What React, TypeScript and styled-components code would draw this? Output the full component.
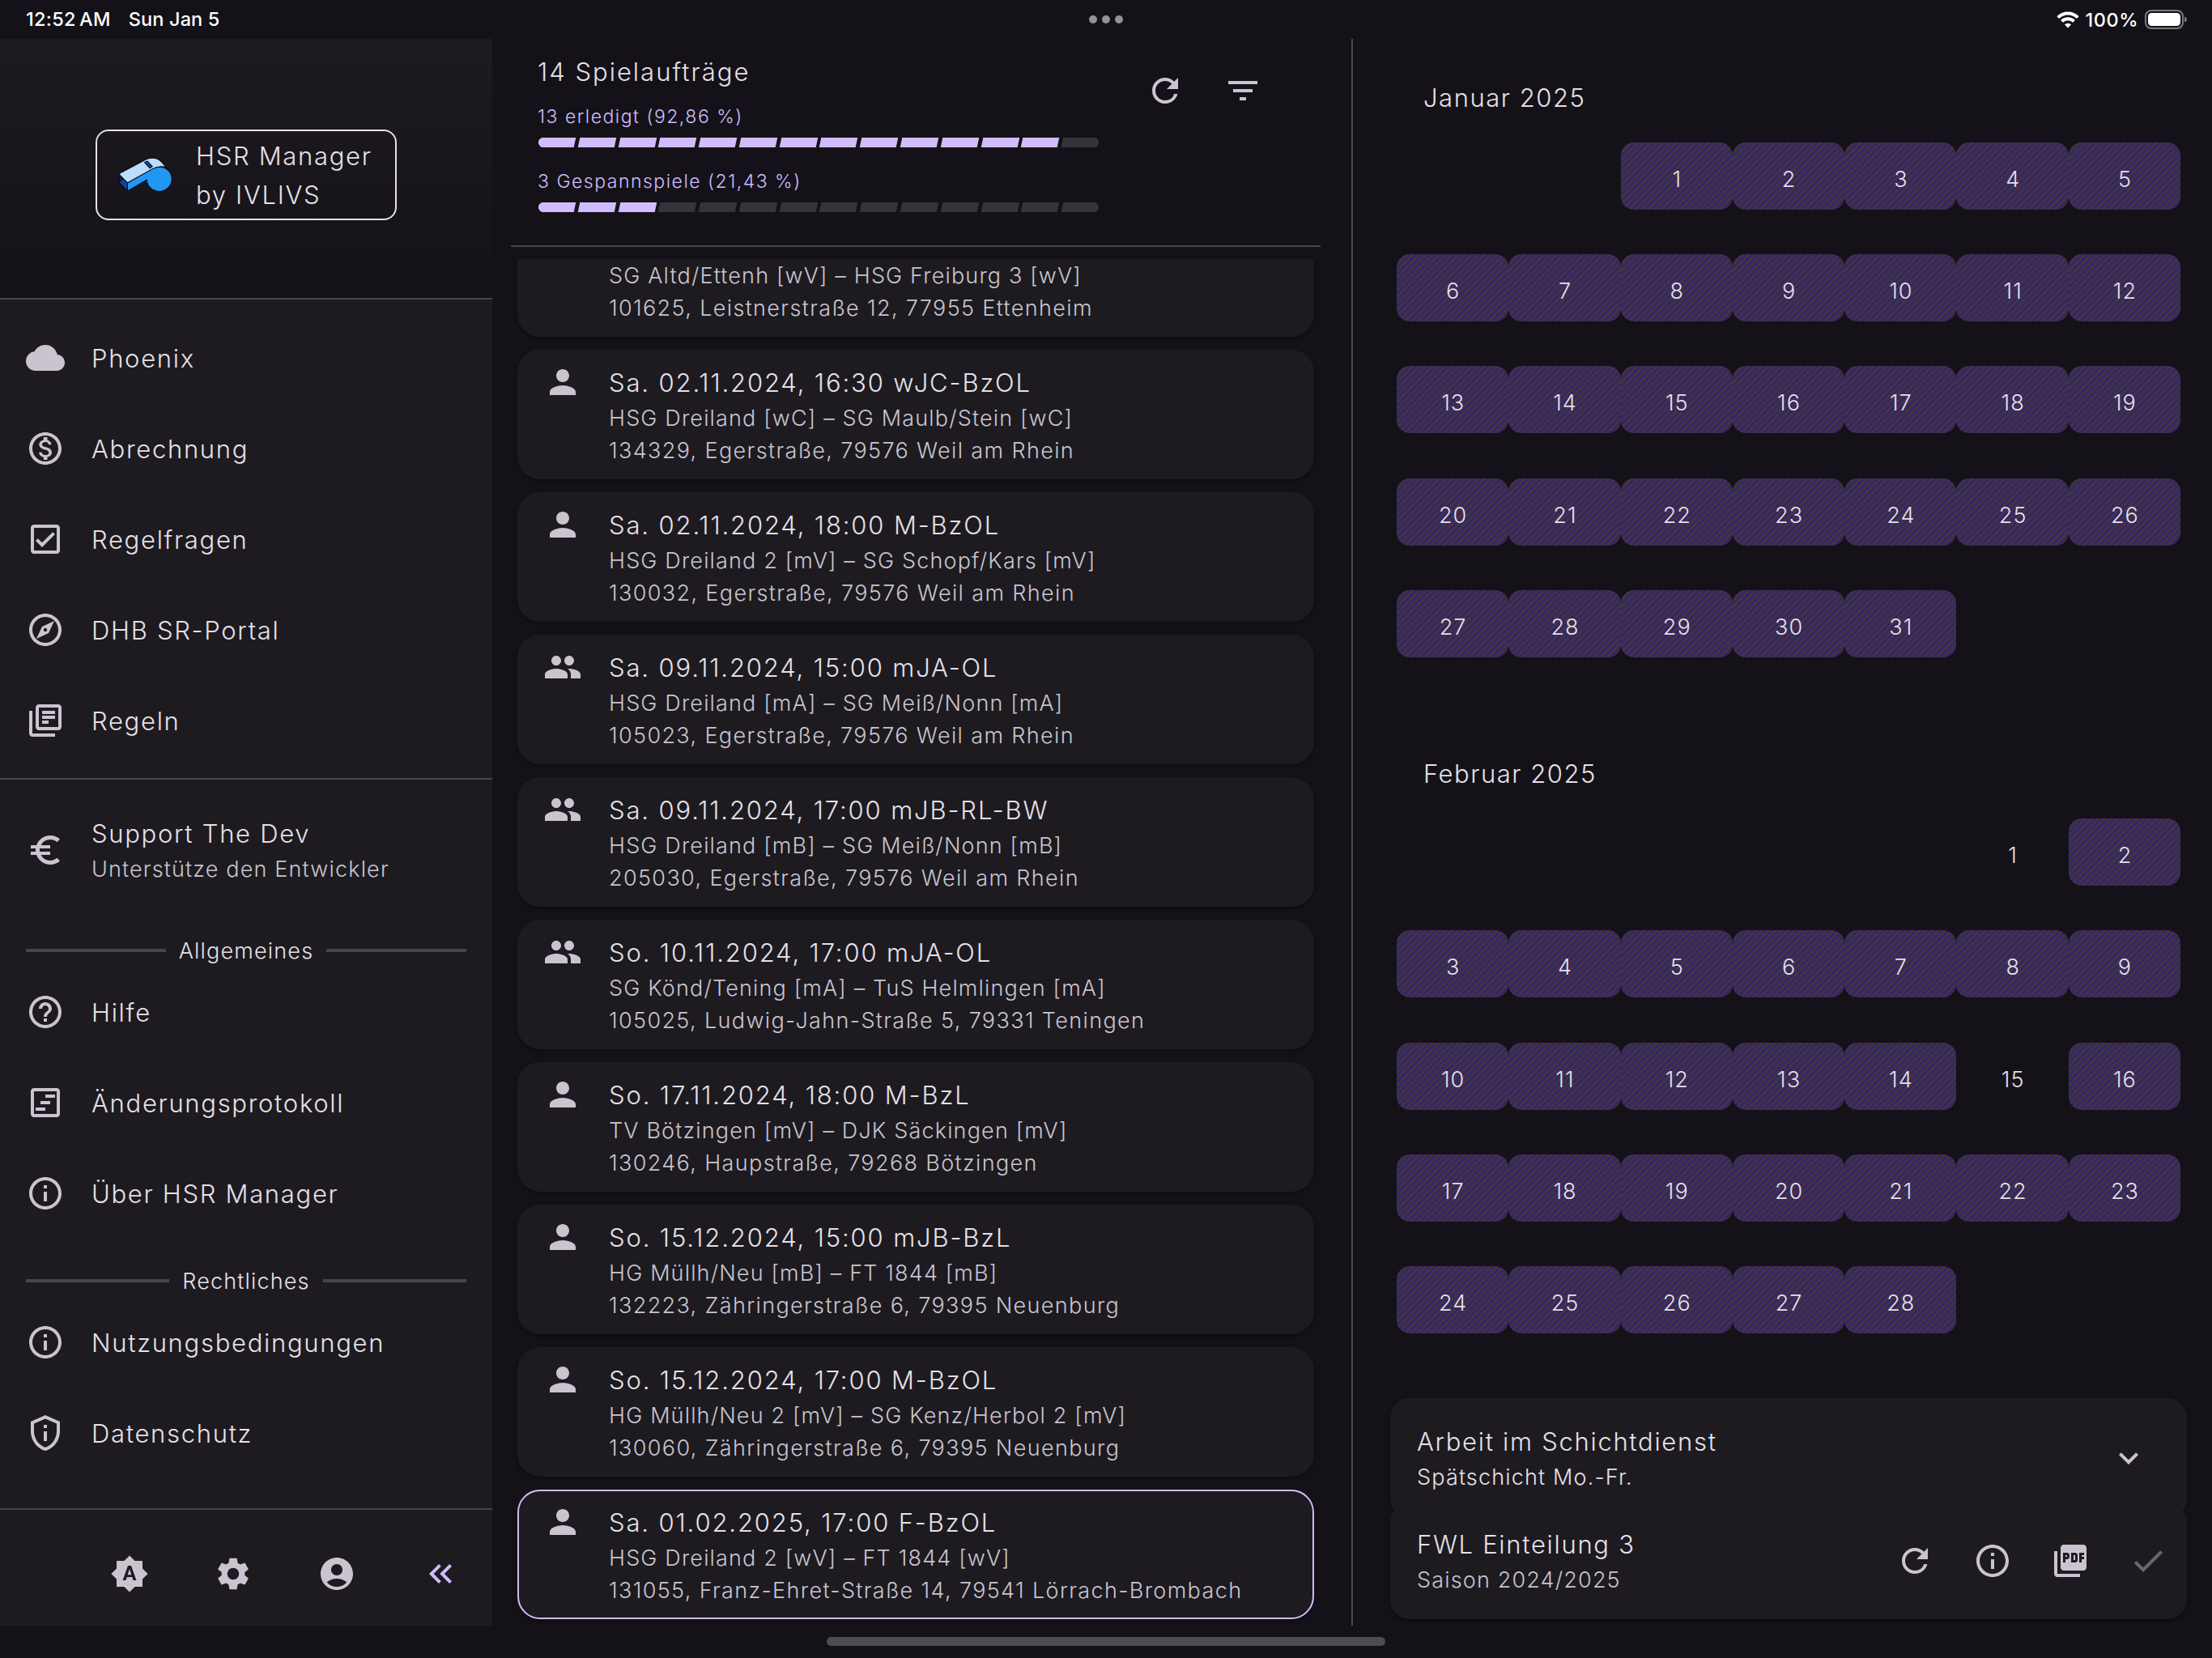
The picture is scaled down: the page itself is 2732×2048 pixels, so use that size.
import React from "react";
import styled, { createGlobalStyle, css } from "styled-components";
import type { IconType } from "react-icons";
import {
  MdCloud,
  MdOutlineMonetizationOn,
  MdOutlineCheckBox,
  MdOutlineExplore,
  MdOutlineLibraryBooks,
  MdEuroSymbol,
  MdHelpOutline,
  MdInfoOutline,
  MdOutlinePrivacyTip,
  MdBrightnessAuto,
  MdSettings,
  MdAccountCircle,
  MdKeyboardDoubleArrowLeft,
  MdRefresh,
  MdFilterList,
  MdPerson,
  MdPeople,
  MdPictureAsPdf,
  MdCheck,
  MdExpandMore,
} from "react-icons/md";

const color = {
  background: "#141218",
  surface: "#1d1b20",
  text: "#e6e0e9",
  muted: "#cac4d0",
  outline: "#49454f",
  accent: "#d0bcff",
  track: "#36343b",
  busy: "#3d3446",
  busyStripe: "#381e72",
  disabled: "#6a676d",
};

const GlobalStyle = createGlobalStyle`
  *, *::before, *::after { box-sizing: border-box; }
  body {
    margin: 0;
    background: ${color.background};
    color: ${color.text};
    font-family: Inter, "Liberation Sans", sans-serif;
    font-weight: 360;
  }
`;

/* ---------- typography ---------- */

const titleText = css<{ $spacing?: number }>`
  font-size: 31px;
  line-height: 48px;
  letter-spacing: ${(p) => p.$spacing ?? 1.7}px;
  color: ${color.text};
  white-space: nowrap;
`;

const bodyText = css<{ $spacing?: number }>`
  font-size: 27px;
  line-height: 40px;
  letter-spacing: ${(p) => p.$spacing ?? 1.16}px;
  white-space: nowrap;
`;

const Title = styled.div<{ $spacing?: number }>`
  ${titleText}
`;

const Subtitle = styled.div<{ $bright?: boolean; $spacing?: number }>`
  ${bodyText}
  color: ${(p) => (p.$bright ? color.text : color.muted)};
`;

/* ---------- frame ---------- */

const Screen = styled.div`
  width: 2732px;
  height: 2048px;
  display: grid;
  grid-template-rows: 48px 1960px 40px;
  overflow: hidden;
`;

const StatusBar = styled.header`
  display: grid;
  grid-template-columns: 1fr auto 1fr;
  align-items: center;
  padding: 0 31px;
  color: #fff;
  font-size: 23.5px;
  font-weight: 500;
  letter-spacing: 0.15px;
`;

const Clock = styled.div`
  display: flex;
  gap: 22px;
  padding-left: 1px;
  line-height: 28px;
  margin-top: -1px;
`;

const Time = styled.span`
  word-spacing: -2.5px;
  letter-spacing: 0.3px;
`;

const Dots = styled.div`
  display: flex;
  gap: 6px;
`;

const Dot = styled.span`
  width: 10px;
  height: 10px;
  border-radius: 50%;
  background: #949297;
`;

const Indicators = styled.div`
  display: flex;
  justify-content: flex-end;
  align-items: center;
  gap: 8px;
  letter-spacing: 0.5px;
`;

const Columns = styled.div`
  display: grid;
  grid-template-columns: 608px 1061px 1fr;
  min-height: 0;
`;

const HomeArea = styled.footer`
  display: flex;
  justify-content: center;
  padding-top: 14px;
`;

const HomeIndicator = styled.div`
  width: 690px;
  height: 11px;
  border-radius: 6px;
  background: #4d4c4f;
`;

/* ---------- sidebar ---------- */

const Sidebar = styled.nav`
  display: flex;
  flex-direction: column;
  background: ${color.surface};
`;

const Brand = styled.div`
  height: 322px;
  display: flex;
  justify-content: center;
  align-items: flex-start;
  padding-top: 112px;
  border-bottom: 2px solid ${color.outline};
  background: linear-gradient(${color.surface}, ${color.background});
`;

const BrandBox = styled.div`
  width: 372px;
  height: 112px;
  display: flex;
  align-items: center;
  gap: 26px;
  padding-left: 25px;
  border: 2px solid ${color.text};
  border-radius: 16px;
`;

const BrandName = styled.div`
  ${titleText}
  padding-top: 1px;
`;

const Menu = styled.ul`
  list-style: none;
  margin: 0;
  padding: 0;
`;

const MenuRow = styled.li<{ $tall?: boolean }>`
  height: ${(p) => (p.$tall ? 144 : 112)}px;
  display: flex;
  align-items: center;
  gap: 33px;
  padding: 0 32px;
  color: ${color.muted};
`;

const MenuLabel = styled(Title)`
  padding-top: 1px;
`;

const MainMenu = styled(Menu)`
  padding-top: 16px;
`;

const Rule = styled.div`
  height: 32px;
  display: flex;
  align-items: center;
  &::after {
    content: "";
    flex: 1;
    height: 2px;
    background: ${color.outline};
  }
`;

const SectionHeading = styled.h2`
  ${bodyText}
  height: 40px;
  display: flex;
  align-items: center;
  gap: 16px;
  margin: 32px 0 0;
  padding: 0 32px;
  font-weight: inherit;
  color: ${color.text};
  &::before,
  &::after {
    content: "";
    flex: 1;
    height: 4px;
    background: ${color.outline};
  }
`;

const HeadingText = styled.span`
  padding-top: 2px;
`;

const SidebarActions = styled.div`
  margin-top: auto;
  height: 145px;
  display: flex;
  justify-content: flex-end;
  align-items: center;
  padding: 14px 0 0;
  border-top: 2px solid ${color.outline};
`;

const IconButton = styled.button<{ $wide?: boolean; $tone?: string }>`
  width: ${(p) => (p.$wide ? 128 : 96)}px;
  height: 96px;
  display: flex;
  align-items: center;
  justify-content: center;
  flex: none;
  padding: 0;
  border: 0;
  background: none;
  color: ${(p) => p.$tone ?? color.muted};
`;

/* ---------- assignments ---------- */

const Assignments = styled.main`
  display: flex;
  flex-direction: column;
  min-height: 0;
`;

const Summary = styled.section`
  height: 257px;
  margin: 0 38px 15px 23px;
  display: flex;
  justify-content: space-between;
  padding: 17px 48px 0 33px;
  border-bottom: 2px solid ${color.outline};
`;

const Progress = styled.div`
  width: 693px;
`;

const ProgressLabel = styled.div`
  padding-top: 13px;
  font-size: 23px;
  line-height: 36px;
  letter-spacing: 1.5px;
  white-space: nowrap;
  color: ${color.accent};
`;

const Bar = styled.div`
  height: 12px;
  margin: 8px 0 11px 1px;
  display: flex;
  gap: 5px;
  border-radius: 6px;
  overflow: hidden;
`;

const Segment = styled.span<{ $on: boolean }>`
  --fill: ${(p) => (p.$on ? color.accent : color.track)};
  flex: 1;
  background: var(--fill);
  transform: skewX(-12deg);
  &:first-child {
    box-shadow: -4px 0 0 var(--fill);
  }
  &:last-child {
    box-shadow: 4px 0 0 var(--fill);
  }
`;

const SummaryActions = styled.div`
  display: flex;
  align-items: flex-start;
  margin-top: -1px;
`;

const MatchList = styled.div`
  flex: 1;
  min-height: 0;
  display: flex;
  flex-direction: column;
  justify-content: flex-end;
  gap: 16px;
  padding: 0 46px 8px 31px;
  overflow: hidden;
`;

const cardShadow = css`
  box-shadow: 0 2px 4px rgba(0, 0, 0, 0.35);
`;

const MatchCard = styled.article<{ $selected: boolean }>`
  height: 160px;
  flex: none;
  display: flex;
  gap: 33px;
  padding: 15px 30px;
  border: 2px solid ${(p) => (p.$selected ? color.accent : color.surface)};
  border-radius: 28px;
  background: ${color.surface};
  color: ${color.muted};
  ${cardShadow}
`;

const MatchIcon = styled.div`
  margin-top: -1px;
`;

/* ---------- calendar ---------- */

const Planner = styled.aside`
  display: flex;
  flex-direction: column;
  justify-content: space-between;
  border-left: 2px solid ${color.outline};
  padding: 0 31px 8px 46px;
`;

const Calendar = styled.div`
  display: flex;
  flex-direction: column;
  gap: 44px;
  padding: 0 8px;
`;

const Month = styled.section``;

const MonthName = styled.h3`
  ${titleText}
  height: 100px;
  margin: 0;
  padding: 49px 0 0 33px;
  font-weight: inherit;
  letter-spacing: 1.54px;
`;

const Days = styled.div`
  display: grid;
  grid-template-columns: repeat(7, 1fr);
`;

const DaySlot = styled.div<{ $column?: number }>`
  aspect-ratio: 1;
  display: flex;
  align-items: center;
  ${(p) => p.$column && `grid-column-start: ${p.$column};`}
`;

const Day = styled.div<{ $free: boolean }>`
  flex: 1;
  height: 83px;
  display: flex;
  align-items: center;
  justify-content: center;
  padding: 8px 0 0 1px;
  border-radius: 16px;
  font-size: 27px;
  letter-spacing: 1px;
  ${(p) =>
    !p.$free &&
    css`
      background: repeating-linear-gradient(
        135deg,
        ${color.busyStripe} 0 1.2px,
        ${color.busy} 1.9px 4.95px,
        ${color.busyStripe} 5.65px
      );
    `}
`;

const PlanCards = styled.div`
  display: flex;
  flex-direction: column;
`;

const PlanCard = styled.article<{ $height: number }>`
  height: ${(p) => p.$height}px;
  display: flex;
  align-items: center;
  padding-left: 33px;
  border-radius: 24px;
  background: ${color.surface};
  ${cardShadow}
  & + & {
    margin-top: -19px;
    box-shadow: 0 4px 4px -1px rgba(0, 0, 0, 0.35);
  }
`;

const PlanText = styled.div`
  flex: 1;
`;

const PlanActions = styled.div<{ $inset?: boolean }>`
  display: flex;
  padding-right: ${(p) => (p.$inset ? 24 : 0)}px;
`;

/* ---------- drawings ---------- */

const ICON = 48;

const TimelineIcon = () => (
  <svg width={ICON} height={ICON} viewBox="0 0 24 24" fill="currentColor">
    <path d="M19 3H5c-1.1 0-2 .9-2 2v14c0 1.1.9 2 2 2h14c1.1 0 2-.9 2-2V5c0-1.100-.9-2-2-2zm0 16H5V5h14v14zM12 7h6v2h-6zM9 11h6v2H9zM6 15h6v2H6z" />
  </svg>
);

const Whistle = () => (
  <svg width="71" height="47" viewBox="45 40 210 138" stroke="#0b0b12" strokeWidth="3" strokeLinejoin="round">
    <path d="M143 132 L154 124 L154 142 Z" fill="#0d47a1" />
    <path d="M81 137 L170 87 Q182 79 200 78 A46 45 0 1 1 152 126 L81 167 Z" fill="#2196f3" />
    <path d="M50 104 L152 50 Q166 44 184 47 Q198 50 208 62 L223 81 Q200 72 174 85 L81 137 Z" fill="#bbdefb" />
    <path d="M50 104 L81 137 L81 167 L50 133 Z" fill="#0d47a1" />
    <path d="M51 133 L64 124 L51 112 Z" fill="#0b2f70" />
    <path d="M144 62 L154 57 L173 77 L163 83 Z" fill="#0d47a1" />
  </svg>
);

const Wifi = () => (
  <svg width="28" height="21" viewBox="0 0 28 21" fill="none" stroke="#fff" strokeWidth="4">
    <path d="M1.800 7.600 A17 17 0 0 1 26.200 7.600" />
    <path d="M6.500 12.400 A10.500 10.500 0 0 1 21.500 12.400" />
    <path d="M14 20.500 L9.900 16.300 A6 6 0 0 1 18.100 16.300 Z" fill="#fff" stroke="none" />
  </svg>
);

const Battery = () => (
  <svg width="52" height="24" viewBox="0 0 52 24">
    <rect x="1" y="1" width="46" height="22" rx="7" fill="none" stroke="#7a797d" strokeWidth="2" />
    <rect x="4" y="4" width="40" height="16" rx="4.500" fill="#fff" />
    <path d="M49 8.500c2 .6 3 2 3 3.500s-1 2.900-3 3.500z" fill="#7a797d" />
  </svg>
);

/* ---------- data ---------- */

type Entry = { icon: IconType | (() => React.ReactElement); label: string };

const mainMenu: Entry[] = [
  { icon: MdCloud, label: "Phoenix" },
  { icon: MdOutlineMonetizationOn, label: "Abrechnung" },
  { icon: MdOutlineCheckBox, label: "Regelfragen" },
  { icon: MdOutlineExplore, label: "DHB SR-Portal" },
  { icon: MdOutlineLibraryBooks, label: "Regeln" },
];

const sections: { heading: string; entries: Entry[] }[] = [
  {
    heading: "Allgemeines",
    entries: [
      { icon: MdHelpOutline, label: "Hilfe" },
      { icon: TimelineIcon, label: "Änderungsprotokoll" },
      { icon: MdInfoOutline, label: "Über HSR Manager" },
    ],
  },
  {
    heading: "Rechtliches",
    entries: [
      { icon: MdInfoOutline, label: "Nutzungsbedingungen" },
      { icon: MdOutlinePrivacyTip, label: "Datenschutz" },
    ],
  },
];

type Match = { when: string; teams: string; place: string; pair?: boolean };

const matches: Match[] = [
  { when: "", teams: "SG Altd/Ettenh [wV] – HSG Freiburg 3 [wV]", place: "101625, Leistnerstraße 12, 77955 Ettenheim" },
  { when: "Sa. 02.11.2024, 16:30 wJC-BzOL", teams: "HSG Dreiland [wC] – SG Maulb/Stein [wC]", place: "134329, Egerstraße, 79576 Weil am Rhein" },
  { when: "Sa. 02.11.2024, 18:00 M-BzOL", teams: "HSG Dreiland 2 [mV] – SG Schopf/Kars [mV]", place: "130032, Egerstraße, 79576 Weil am Rhein" },
  { when: "Sa. 09.11.2024, 15:00 mJA-OL", teams: "HSG Dreiland [mA] – SG Meiß/Nonn [mA]", place: "105023, Egerstraße, 79576 Weil am Rhein", pair: true },
  { when: "Sa. 09.11.2024, 17:00 mJB-RL-BW", teams: "HSG Dreiland [mB] – SG Meiß/Nonn [mB]", place: "205030, Egerstraße, 79576 Weil am Rhein", pair: true },
  { when: "So. 10.11.2024, 17:00 mJA-OL", teams: "SG Könd/Tening [mA] – TuS Helmlingen [mA]", place: "105025, Ludwig-Jahn-Straße 5, 79331 Teningen", pair: true },
  { when: "So. 17.11.2024, 18:00 M-BzL", teams: "TV Bötzingen [mV] – DJK Säckingen [mV]", place: "130246, Haupstraße, 79268 Bötzingen" },
  { when: "So. 15.12.2024, 15:00 mJB-BzL", teams: "HG Müllh/Neu [mB] – FT 1844 [mB]", place: "132223, Zähringerstraße 6, 79395 Neuenburg" },
  { when: "So. 15.12.2024, 17:00 M-BzOL", teams: "HG Müllh/Neu 2 [mV] – SG Kenz/Herbol 2 [mV]", place: "130060, Zähringerstraße 6, 79395 Neuenburg" },
  { when: "Sa. 01.02.2025, 17:00 F-BzOL", teams: "HSG Dreiland 2 [wV] – FT 1844 [wV]", place: "131055, Franz-Ehret-Straße 14, 79541 Lörrach-Brombach" },
];

const months = [
  { name: "Januar 2025", firstColumn: 3, length: 31, free: [] as number[] },
  { name: "Februar 2025", firstColumn: 6, length: 28, free: [1, 15] },
];

const range = (n: number) => Array.from({ length: n }, (_, i) => i + 1);

/* ---------- parts ---------- */

const MenuEntry = ({ icon: Icon, label }: Entry) => (
  <MenuRow>
    <Icon size={ICON} />
    <MenuLabel>{label}</MenuLabel>
  </MenuRow>
);

const ProgressBar = ({ done, total }: { done: number; total: number }) => (
  <Bar>
    {range(total).map((n) => (
      <Segment key={n} $on={n <= done} />
    ))}
  </Bar>
);

export default function App() {
  return (
    <>
      <GlobalStyle />
      <Screen>
        <StatusBar>
          <Clock>
            <Time>12:52 AM</Time>
            <span>Sun Jan 5</span>
          </Clock>
          <Dots>
            <Dot />
            <Dot />
            <Dot />
          </Dots>
          <Indicators>
            <Wifi />
            <span>100%</span>
            <Battery />
          </Indicators>
        </StatusBar>

        <Columns>
          <Sidebar>
            <Brand>
              <BrandBox>
                <Whistle />
                <BrandName>
                  HSR Manager
                  <br />
                  by IVLIVS
                </BrandName>
              </BrandBox>
            </Brand>
            <MainMenu>
              {mainMenu.map((e) => (
                <MenuEntry key={e.label} {...e} />
              ))}
            </MainMenu>
            <Rule />
            <Menu>
              <MenuRow $tall>
                <MdEuroSymbol size={ICON} />
                <div>
                  <Title>Support The Dev</Title>
                  <Subtitle>Unterstütze den Entwickler</Subtitle>
                </div>
              </MenuRow>
            </Menu>
            {sections.map((s) => (
              <React.Fragment key={s.heading}>
                <SectionHeading>
                  <HeadingText>{s.heading}</HeadingText>
                </SectionHeading>
                <Menu>
                  {s.entries.map((e) => (
                    <MenuEntry key={e.label} {...e} />
                  ))}
                </Menu>
              </React.Fragment>
            ))}
            <SidebarActions>
              <IconButton $wide><MdBrightnessAuto size={ICON} /></IconButton>
              <IconButton $wide><MdSettings size={ICON} /></IconButton>
              <IconButton $wide><MdAccountCircle size={ICON} /></IconButton>
              <IconButton $wide $tone={color.accent}><MdKeyboardDoubleArrowLeft size={ICON} /></IconButton>
            </SidebarActions>
          </Sidebar>

          <Assignments>
            <Summary>
              <Progress>
                <Title $spacing={2}>14 Spielaufträge</Title>
                <ProgressLabel>13 erledigt (92,86 %)</ProgressLabel>
                <ProgressBar done={13} total={14} />
                <ProgressLabel>3 Gespannspiele (21,43 %)</ProgressLabel>
                <ProgressBar done={3} total={14} />
              </Progress>
              <SummaryActions>
                <IconButton><MdRefresh size={ICON} /></IconButton>
                <IconButton><MdFilterList size={ICON} /></IconButton>
              </SummaryActions>
            </Summary>
            <MatchList>
              {matches.map((m, i) => (
                <MatchCard key={m.place + m.when} $selected={i === matches.length - 1}>
                  <MatchIcon>{m.pair ? <MdPeople size={ICON} /> : <MdPerson size={ICON} />}</MatchIcon>
                  <div>
                    <Title $spacing={1.86}>{m.when || "\u00a0"}</Title>
                    <Subtitle>{m.teams}</Subtitle>
                    <Subtitle $spacing={1.36}>{m.place}</Subtitle>
                  </div>
                </MatchCard>
              ))}
            </MatchList>
          </Assignments>

          <Planner>
            <Calendar>
              {months.map((m) => (
                <Month key={m.name}>
                  <MonthName>{m.name}</MonthName>
                  <Days>
                    {range(m.length).map((d) => (
                      <DaySlot key={d} $column={d === 1 ? m.firstColumn : undefined}>
                        <Day $free={m.free.includes(d)}>{d}</Day>
                      </DaySlot>
                    ))}
                  </Days>
                </Month>
              ))}
            </Calendar>
            <PlanCards>
              <PlanCard $height={148}>
                <PlanText>
                  <Title>Arbeit im Schichtdienst</Title>
                  <Subtitle $bright>Spätschicht Mo.-Fr.</Subtitle>
                </PlanText>
                <PlanActions $inset>
                  <IconButton><MdExpandMore size={ICON} /></IconButton>
                </PlanActions>
              </PlanCard>
              <PlanCard $height={144}>
                <PlanText>
                  <Title>FWL Einteilung 3</Title>
                  <Subtitle>Saison 2024/2025</Subtitle>
                </PlanText>
                <PlanActions>
                  <IconButton><MdRefresh size={ICON} /></IconButton>
                  <IconButton><MdInfoOutline size={ICON} /></IconButton>
                  <IconButton><MdPictureAsPdf size={ICON} /></IconButton>
                  <IconButton $tone={color.disabled}><MdCheck size={ICON} /></IconButton>
                </PlanActions>
              </PlanCard>
            </PlanCards>
          </Planner>
        </Columns>

        <HomeArea>
          <HomeIndicator />
        </HomeArea>
      </Screen>
    </>
  );
}
